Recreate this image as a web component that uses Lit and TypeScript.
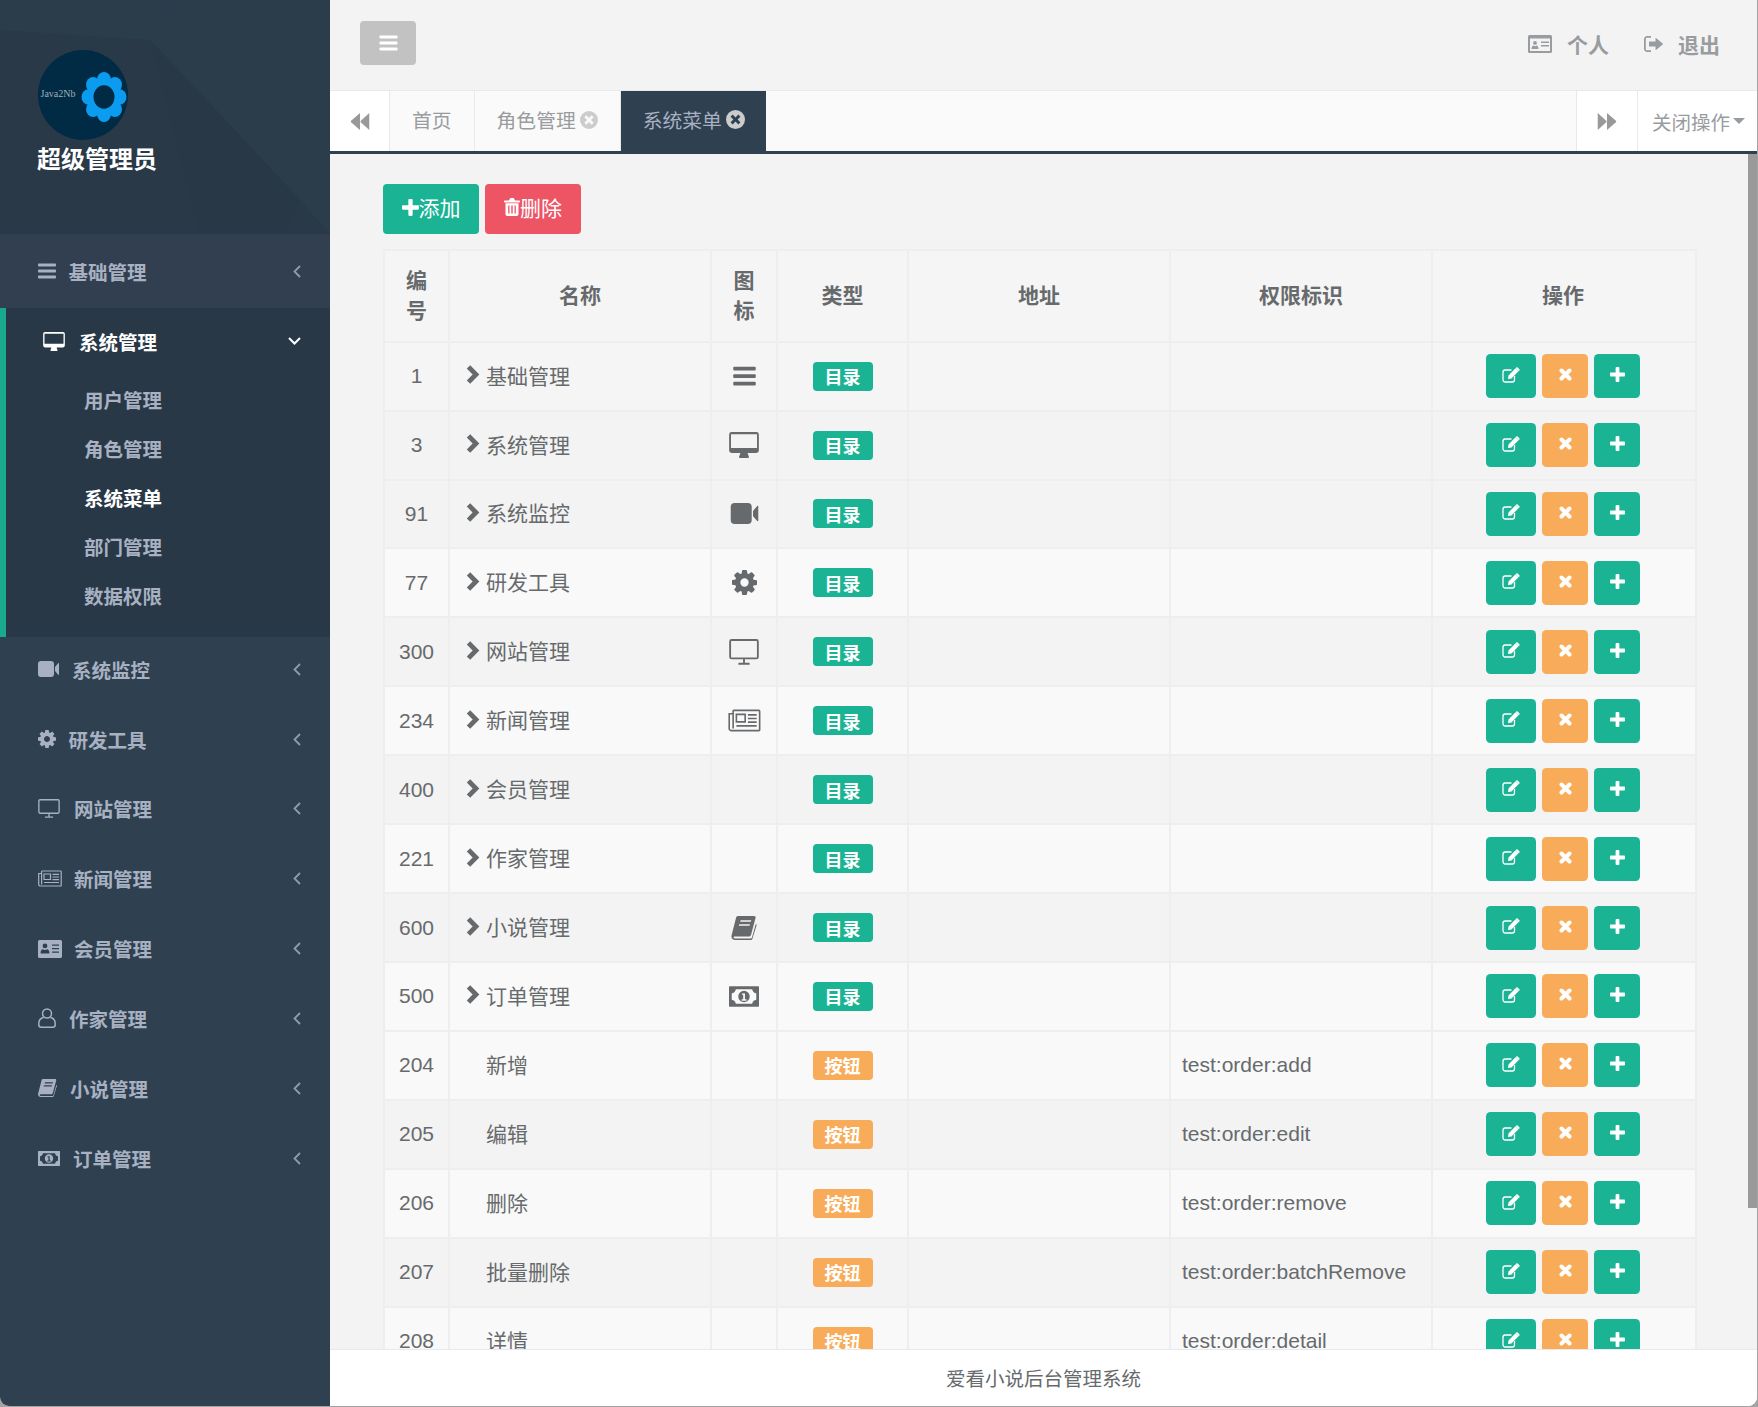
import { LitElement, html, css, svg } from "lit";
import { customElement } from "lit/decorators.js";

const ic = {
  bars: (w = 18, h = 16) => html`<svg class="ic" width=${w} height=${h} viewBox="0 0 18 16"><g fill="currentColor"><rect y="0.5" width="18" height="3" rx=".8"/><rect y="6.5" width="18" height="3" rx=".8"/><rect y="12.5" width="18" height="3" rx=".8"/></g></svg>`,
  desktop: (w = 22, h = 19) => html`<svg class="ic" width=${w} height=${h} viewBox="0 0 24 21"><path fill="currentColor" fill-rule="evenodd" d="M2 0h20a2 2 0 0 1 2 2v13a2 2 0 0 1-2 2h-7c0 1.5 1 2.5 1 3.2 0 .5-.4.8-.8.8H8.8c-.4 0-.8-.3-.8-.8 0-.7 1-1.700 1-3.200H2a2 2 0 0 1-2-2V2a2 2 0 0 1 2-2zM1.500 1.800v11.200h21V1.800z"/></svg>`,
  tv: (w = 22, h = 19) => html`<svg class="ic" width=${w} height=${h} viewBox="0 0 24 21"><path fill="none" stroke="currentColor" stroke-width="1.500" d="M2 .8h20c.7 0 1.200.5 1.200 1.200v12.500c0 .7-.5 1.200-1.200 1.200H2c-.7 0-1.200-.5-1.200-1.200V2C.8 1.300 1.300.8 2 .8zM12 16v3.500M7.500 20h9"/></svg>`,
  video: (w = 21, h = 16) => html`<svg class="ic" width=${w} height=${h} viewBox="0 0 21 16"><path fill="currentColor" d="M3 0h10a3 3 0 0 1 3 3v10a3 3 0 0 1-3 3H3a3 3 0 0 1-3-3V3a3 3 0 0 1 3-3zM17 6l3.200-3.800c.3-.3.800-.1.800.4v10.800c0 .5-.5.7-.8.4L17 10z"/></svg>`,
  cog: (w = 18, h = 18) => html`<svg class="ic" width=${w} height=${h} viewBox="128 128 1536 1536"><path fill="currentColor" d="M1152 896q0-106-75-181t-181-75-181 75-75 181 75 181 181 75 181-75 75-181zm512-109v222q0 12-8 23t-20 13l-185 28q-19 54-39 91 35 50 107 138 10 12 10 25t-9 23q-27 37-99 108t-94 71q-12 0-26-9l-138-108q-44 23-91 38-16 136-29 186-7 28-36 28h-222q-14 0-24.500-8.500t-11.500-21.500l-28-184q-49-16-90-37l-141 107q-10 9-25 9-14 0-25-11-126-114-165-168-7-10-7-23 0-12 8-23 15-21 51-66.500t54-70.500q-27-50-41-99l-183-27q-13-2-21-12.500t-8-23.500v-222q0-12 8-23t19-13l186-28q14-46 39-92-40-57-107-138-10-12-10-24 0-10 9-23 26-36 98.500-107.500t94.500-71.500q13 0 26 10l138 107q44-23 91-38 16-136 29-186 7-28 36-28h222q14 0 24.500 8.500t11.500 21.500l28 184q49 16 90 37l142-107q9-9 24-9 13 0 25 10 129 119 165 170 7 8 7 22 0 12-8 23-15 21-51 66.500t-54 70.500q26 50 41 98l183 28q13 2 21 12.500t8 23.500z"/></svg>`,
  news: (w = 24, h = 17) => html`<svg class="ic" width=${w} height=${h} viewBox="0 0 24 17"><g fill="none" stroke="currentColor" stroke-width="1.200"><path d="M3.600 1h19c.3 0 .6.300.6.600v13.800c0 .3-.3.600-.6.600H2.300C1.400 16 .7 15.300.7 14.400V3.500h2.900"/><path d="M3.600 1v13.500M6 4h6.500v5.500H6zM14.500 4.300h6.500M14.500 7h6.500M14.500 9.700h6.500M6 12.500h15"/></g></svg>`,
  card: (w = 24, h = 18) => html`<svg class="ic" width=${w} height=${h} viewBox="0 0 24 18"><path fill="currentColor" fill-rule="evenodd" d="M1.500 0h21A1.500 1.500 0 0 1 24 1.500v15a1.500 1.500 0 0 1-1.500 1.500h-21A1.500 1.500 0 0 1 0 16.500v-15A1.500 1.500 0 0 1 1.500 0zM7 3.500a2.400 2.400 0 1 0 0 4.800 2.400 2.400 0 0 0 0-4.800zM3 13.500h8c.3 0 .5-.2.500-.5-.2-2.500-1.200-3.800-2.500-3.800-.6.500-1.200.7-2 .7s-1.400-.2-2-.7c-1.300 0-2.300 1.300-2.500 3.800 0 .3.200.5.500.5zM14 4.500v1.300h7V4.500zM14 8v1.300h7V8zM14 11.500v1.300h7v-1.300z"/></svg>`,
  cardHead: (w = 24, h = 18) => html`<svg class="ic" width=${w} height=${h} viewBox="0 0 24 18"><path fill="currentColor" fill-rule="evenodd" d="M1.500 0h21A1.500 1.500 0 0 1 24 1.500v15a1.500 1.500 0 0 1-1.500 1.500h-21A1.500 1.500 0 0 1 0 16.500v-15A1.500 1.500 0 0 1 1.500 0zM2 3.500v12.500h20V3.500zM7 6a1.900 1.900 0 1 1 0 3.800A1.900 1.900 0 0 1 7 6zM3.500 14c.1-2 1-3.400 2-3.400.5.400 1 .6 1.500.6s1-.2 1.500-.6c1 0 1.900 1.400 2 3.400zM13 6.500h8v1.600h-8zM13 10h8v1.600h-8z"/></svg>`,
  user: (w = 18, h = 20) => html`<svg class="ic" width=${w} height=${h} viewBox="0 0 18 20"><g fill="none" stroke="currentColor" stroke-width="1.500"><circle cx="9" cy="5.500" r="4.500"/><path d="M5.500 9.500C3 10 .8 12 .8 15.500v1.200c0 1.400 1 2.500 2.500 2.500h11.400c1.500 0 2.500-1.100 2.500-2.500v-1.200c0-3.500-2.200-5.500-4.700-6"/></g></svg>`,
  book: (w = 19, h = 18) => html`<svg class="ic" width=${w} height=${h} viewBox="0 0 19 18"><path fill="currentColor" fill-rule="evenodd" d="M5 0h12c.9 0 1.400.6 1.200 1.400L14.800 14c-.3 1-.8 1.300-1.800 1.300H2.800c-.9 0-1.300.4-1 1 .2.400.6.600 1 .6h11.800c.4 0 .7-.2.800-.6l3-10.500c.3.300.6.700.5 1.300L15.800 17c-.2.700-.8 1-1.400 1H2.800C1.500 18 .3 17 .1 15.700c-.1-.5 0-1 .2-1.600L3.500 1.500C3.700.7 4.200 0 5 0zM7 3.200l-.4 1.200h8l.4-1.200zM6 6.200l-.4 1.200h8l.4-1.200z"/></svg>`,
  money: (w = 22, h = 15) => html`<svg class="ic" width=${w} height=${h} viewBox="0 0 22 15"><path fill="currentColor" fill-rule="evenodd" d="M.5 0h21c.3 0 .5.200.5.500v14c0 .3-.2.500-.5.500H.5c-.3 0-.5-.2-.5-.5V.500C0 .2.200 0 .5 0zM5 2.200C4.800 3.800 3.600 5 2 5.200v4.600c1.600.2 2.800 1.400 3 3h12c.2-1.600 1.400-2.800 3-3V5.200c-1.600-.2-2.800-1.400-3-3zM11 3.300a4.200 4.200 0 1 1 0 8.400 4.200 4.200 0 0 1 0-8.400zM9.500 5.300v1h.9v3.300H9.300v1h3.500v-1h-1.100V5.300z"/></svg>`,
  edit: (w = 18, h = 16) => html`<svg class="ic" width=${w} height=${h} viewBox="0 0 18 16"><path fill="none" stroke="currentColor" stroke-width="1.300" d="M12.500 9v3.800c0 1.200-.9 2.200-2.100 2.200H3.100C1.900 15 1 14 1 12.800V5.200C1 4 1.900 3 3.100 3h6.400"/><path fill="currentColor" d="M6.500 8.500 13.500 1.300l3 3-7 7.200-3.500.6zM14.300.5c.4-.4.900-.4 1.300 0l1.800 1.800c.4.400.4.900 0 1.300l-.6.600-3-3z"/></svg>`,
  times: (s = 13) => html`<svg class="ic" width=${s} height=${s} viewBox="0 0 13 13"><path stroke="currentColor" stroke-width="4" stroke-linecap="round" d="M2.500 2.500l8 8M10.500 2.500l-8 8"/></svg>`,
  plus: (s = 15) => html`<svg class="ic" width=${s} height=${s} viewBox="0 0 15 15"><path fill="currentColor" d="M5.600 1c0-.5.400-1 1-1h1.800c.6 0 1 .5 1 1v4.600H14c.5 0 1 .4 1 1v1.800c0 .6-.5 1-1 1H9.400V14c0 .5-.4 1-1 1H6.600c-.6 0-1-.5-1-1V9.400H1c-.5 0-1-.4-1-1V6.600c0-.6.500-1 1-1h4.600z"/></svg>`,
  trash: () => html`<svg class="ic" width="16" height="18" viewBox="0 0 16 18"><path fill="currentColor" fill-rule="evenodd" d="M5 2.500 5.800.8C6 .3 6.400 0 6.800 0h2.400c.4 0 .8.300 1 .8l.8 1.700h4.300c.4 0 .7.300.7.700v.6c0 .4-.3.700-.7.700H.7C.3 4.500 0 4.200 0 3.800v-.6c0-.4.300-.7.700-.7zM1.500 5.300h13V16c0 1.100-.8 2-1.800 2H3.300c-1 0-1.800-.9-1.800-2zM4.200 7.500v8h1.300v-8zM7.300 7.500v8h1.400v-8zM10.500 7.500v8h1.300v-8z"/></svg>`,
  circleX: (s = 18) => html`<svg class="ic" width=${s} height=${s} viewBox="0 0 20 20"><path fill="currentColor" fill-rule="evenodd" d="M10 0a10 10 0 1 0 0 20 10 10 0 1 0 0-20zM7 4.800 10 7.800 13 4.800 15.200 7 12.200 10 15.200 13 13 15.200 10 12.200 7 15.200 4.800 13 7.800 10 4.800 7z"/></svg>`,
  back: () => html`<svg class="ic" width="20" height="19" viewBox="0 0 19 18"><path fill="currentColor" d="M9.500 1v16L1 9.800c-.4-.5-.4-1.100 0-1.600zM18.300 1v16l-8-7.200c-.5-.5-.5-1.100 0-1.600z"/></svg>`,
  fwd: () => html`<svg class="ic" width="20" height="19" viewBox="0 0 19 18"><path fill="currentColor" d="M.7 1v16l8-7.200c.5-.5.5-1.100 0-1.600zM9.500 1v16l8.500-7.200c.4-.5.4-1.100 0-1.600z"/></svg>`,
  signout: () => html`<svg class="ic" width="19" height="16" viewBox="0 0 19 16"><path fill="currentColor" d="M7 0v1.700H3.200c-.8 0-1.400.6-1.400 1.400v9.800c0 .8.600 1.400 1.400 1.400H7V16H3.200C1.400 16 0 14.600 0 12.800V3.200C0 1.400 1.400 0 3.200 0zM11.500 2.500c0-.4.500-.6.800-.3l6.400 5.400c.3.200.3.600 0 .8l-6.400 5.400c-.3.300-.8.100-.8-.3V10.500H5.600c-.3 0-.6-.3-.6-.6V6.100c0-.3.300-.6.600-.6h5.900z"/></svg>`,
  left: () => html`<svg class="ic" width="8" height="13" viewBox="0 0 8 13"><path fill="none" stroke="currentColor" stroke-width="1.800" d="M7 1 1.500 6.500 7 12"/></svg>`,
  down: () => html`<svg class="ic" width="13" height="8" viewBox="0 0 13 8"><path fill="none" stroke="currentColor" stroke-width="2" d="M1 1l5.500 5.500L12 1"/></svg>`,
  chev: () => html`<svg class="ic" width="14" height="19" viewBox="0 0 14 19"><path fill="none" stroke="currentColor" stroke-width="4.800" d="M2.500 1.800 10 9.500 2.500 17.200"/></svg>`,
};

type IconKey = "bars" | "desktop" | "tv" | "video" | "cog" | "news" | "card" | "user" | "book" | "money";

const navAfter: { label: string; icon: IconKey; textX: number }[] = [
  { label: "系统监控", icon: "video", textX: 34.5 },
  { label: "研发工具", icon: "cog", textX: 31 },
  { label: "网站管理", icon: "tv", textX: 36.500 },
  { label: "新闻管理", icon: "news", textX: 36.500 },
  { label: "会员管理", icon: "card", textX: 36.500 },
  { label: "作家管理", icon: "user", textX: 31.500 },
  { label: "小说管理", icon: "book", textX: 32.500 },
  { label: "订单管理", icon: "money", textX: 35.500 },
];

const subs = ["用户管理", "角色管理", "系统菜单", "部门管理", "数据权限"];

type Row = { id: number; name: string; icon?: IconKey; type: "目录" | "按钮"; perm?: string; bg: string };
const rows: Row[] = [
  { id: 1, name: "基础管理", icon: "bars", type: "目录", bg: "hov" },
  { id: 3, name: "系统管理", icon: "desktop", type: "目录", bg: "alt" },
  { id: 91, name: "系统监控", icon: "video", type: "目录", bg: "alt" },
  { id: 77, name: "研发工具", icon: "cog", type: "目录", bg: "pl" },
  { id: 300, name: "网站管理", icon: "tv", type: "目录", bg: "alt" },
  { id: 234, name: "新闻管理", icon: "news", type: "目录", bg: "pl" },
  { id: 400, name: "会员管理", type: "目录", bg: "alt" },
  { id: 221, name: "作家管理", type: "目录", bg: "pl" },
  { id: 600, name: "小说管理", icon: "book", type: "目录", bg: "alt" },
  { id: 500, name: "订单管理", icon: "money", type: "目录", bg: "pl" },
  { id: 204, name: "新增", type: "按钮", perm: "test:order:add", bg: "pl" },
  { id: 205, name: "编辑", type: "按钮", perm: "test:order:edit", bg: "alt" },
  { id: 206, name: "删除", type: "按钮", perm: "test:order:remove", bg: "pl" },
  { id: 207, name: "批量删除", type: "按钮", perm: "test:order:batchRemove", bg: "alt" },
  { id: 208, name: "详情", type: "按钮", perm: "test:order:detail", bg: "pl" },
];

const petals = Array.from({ length: 8 }, (_, i) => {
  const a = (i * Math.PI) / 4;
  return { x: Math.sin(a) * 15.5, y: -Math.cos(a) * 15.5 };
});

@customElement("app-root")
export class AppRoot extends LitElement {
  static styles = css`
    :host {
      display: block;
      height: 1407px;
      overflow: hidden;
      background: #a3a3a3;
      font-family: "Liberation Sans", "Noto Sans CJK SC", sans-serif;
      font-size: 19.5px;
      color: #676a6c;
    }
    .frame {
      display: flex;
      height: 1405.500px;
      width: 1757px;
      border-radius: 0 0 9px 9px;
      overflow: hidden;
      background: #fff;
    }
    .ic { display: block; flex: none; }
    .side {
      width: 330px;
      flex: none;
      background: #2f4050;
      display: flex;
      flex-direction: column;
    }
    .brand {
      position: relative;
      height: 234px;
      flex: none;
      box-sizing: border-box;
      padding: 50px 0 0 38px;
      background: #293948;
      overflow: hidden;
    }
    .facets { position: absolute; inset: 0; }
    .logo { position: relative; display: block; }
    .who {
      position: relative;
      margin: 4px 0 0 -1px;
      color: #fff;
      font-size: 24px;
      font-weight: 700;
      line-height: 32px;
    }
    .item {
      display: flex;
      align-items: center;
      height: 69.860px;
      box-sizing: border-box;
      padding: 0 29px 5.500px 37.500px;
      font-weight: 700;
      color: #a7b1c2;
    }
    .item .iw { display: flex; align-items: center; flex: none; }
    .item .lb { flex: 1; }
    .item .arr { color: #8f9bb0; }
    .item.first { height: 74px; padding-top: 0; padding-bottom: 0; background: #313f51; }
    .active {
      background: #293846;
      border-left: 6px solid #19aa8d;
      height: 329px;
      box-sizing: border-box;
      flex: none;
    }
    .active .item { height: 66px; padding: 0 29px 0 37px; color: #fff; }
    .active .item .arr { color: #fff; }
    .sub {
      height: 49.200px;
      line-height: 49.200px;
      padding-left: 78px;
      font-weight: 700;
      color: #a7b1c2;
    }
    .item + .sub { margin-top: 2.500px; }
    .sub.on { color: #fff; }

    .main { flex: 1; min-width: 0; display: flex; flex-direction: column; background: #f3f3f4; }
    .top {
      height: 90px;
      flex: none;
      box-sizing: border-box;
      padding: 21px 37px 0 30px;
      display: flex;
      align-items: flex-start;
      justify-content: space-between;
    }
    .toggle {
      width: 56px;
      height: 44px;
      background: #c2c2c2;
      border-radius: 4px;
      display: flex;
      align-items: center;
      justify-content: center;
      color: #fff;
    }
    .links { display: flex; align-items: center; color: #999c9e; font-weight: 700; font-size: 21px; padding-top: 3px; height: 40px; }
    .links .lk { display: flex; align-items: center; gap: 15px; }
    .links .lk + .lk { margin-left: 35px; }
    .tabs {
      height: 64px;
      flex: none;
      box-sizing: border-box;
      background: #fff;
      border-top: 1px solid #e7eaec;
      border-bottom: 3px solid #2f4050;
      display: flex;
      color: #999c9e;
    }
    .nav-btn {
      width: 59px;
      flex: none;
      display: flex;
      align-items: center;
      justify-content: center;
      color: #999;
      background: #fff;
    }
    .tab-list { flex: 1; display: flex; background: #fafafa; border-left: 1px solid #e7eaec; font-size: 19.800px; }
    .tab {
      display: flex;
      align-items: center;
      gap: 4px;
      padding: 0 22px 3px 22px;
      border-right: 1px solid #e7eaec;
      height: 60px;
      box-sizing: border-box;
    }
    .tab .x { color: #ccc; }
    .tab.cur { background: #2f4050; color: #a7b1c2; height: 63px; border-right: 0; padding: 0 21px 6px 22px; }
    .fwd { border-left: 1px solid #e7eaec; border-right: 1px solid #e7eaec; width: 60px; }
    .close-op { width: 119px; flex: none; box-sizing: border-box; padding: 0 0 0 14px; display: flex; align-items: center; }
    .caret { width: 0; height: 0; margin-left: 3px; border: 6px solid transparent; border-top-color: #999c9e; border-bottom: 0; }

    .content {
      flex: 1;
      min-height: 0;
      position: relative;
      overflow: hidden;
      padding: 30px 0 0 53px;
    }
    .scroll { position: absolute; top: 0; right: 0; width: 9px; height: 1054px; background: #9a9a9a; }
    .btns { display: flex; gap: 6px; }
    .btn {
      width: 96px;
      height: 50px;
      box-sizing: border-box;
      padding-bottom: 4px;
      border-radius: 4px;
      color: #fff;
      font-size: 21px;
      display: flex;
      align-items: center;
      justify-content: center;
    }
    .btn.g { background: #1ab394; }
    .btn.r { background: #ed5565; }
    table {
      margin-top: 15px;
      width: 1312px;
      table-layout: fixed;
      border-collapse: collapse;
      font-size: 21px;
    }
    th, td { border: 2px solid #eeeeee; padding: 0; box-sizing: border-box; }
    th {
      height: 91.700px;
      font-size: 21px;
      line-height: 30px;
      font-weight: 700;
      text-align: center;
      background: #f5f5f5;
    }
    th.c-op { padding-right: 2px; }
    td { height: 68.930px; }
    tr.pl td { background: #f9f9f9; }
    tr.alt td { background: #f3f3f3; }
    tr.hov td { background: #f5f5f5; }
    .c-id { width: 65px; text-align: center; }
    .c-name { width: 262px; }
    .c-ic { width: 66px; }
    .c-ty { width: 131px; text-align: center; }
    .c-ad { width: 262px; }
    .c-pm { width: 262px; }
    .c-op { width: 264px; }
    td.c-pm { padding-left: 11px; }
    .nm { display: flex; align-items: center; padding: 0 0 3px 15.500px; }
    .nm .cv { width: 20.500px; flex: none; }
    .icw { display: flex; justify-content: center; align-items: center; color: #676a6c; }
    .badge {
      display: inline-flex;
      align-items: center;
      justify-content: center;
      width: 60px;
      height: 29px;
      border-radius: 4px;
      color: #fff;
      font-size: 18px;
      font-weight: 700;
      vertical-align: middle;
    }
    .badge.d { background: #1ab394; }
    .badge.b { background: #f8ac59; }
    .ops { display: flex; justify-content: center; gap: 6px; padding-right: 2px; }
    .op {
      width: 46px;
      height: 44px;
      border-radius: 4.500px;
      color: #fff;
      display: flex;
      align-items: center;
      justify-content: center;
      padding-bottom: 3px;
      box-sizing: border-box;
    }
    .op.e { width: 50px; background: #1ab394; }
    .op.o { background: #f8ac59; }
    .op.p { background: #1ab394; }

    .foot {
      height: 57px;
      flex: none;
      box-sizing: border-box;
      background: #fff;
      border-top: 1px solid #e7eaec;
      display: flex;
      align-items: center;
      justify-content: center;
    }
  `;

  private navIcon(k: IconKey) {
    const map: Record<IconKey, () => unknown> = {
      bars: () => ic.bars(),
      desktop: () => ic.desktop(),
      tv: () => ic.tv(),
      video: () => ic.video(),
      cog: () => ic.cog(),
      news: () => ic.news(),
      card: () => ic.card(),
      user: () => ic.user(),
      book: () => ic.book(),
      money: () => ic.money(),
    };
    return map[k]();
  }

  private tableIcon(k?: IconKey) {
    if (!k) return "";
    const map: Record<IconKey, () => unknown> = {
      bars: () => ic.bars(25, 20),
      desktop: () => ic.desktop(30, 26),
      tv: () => ic.tv(30, 26),
      video: () => ic.video(29, 21),
      cog: () => ic.cog(25, 25),
      news: () => ic.news(33, 23),
      card: () => ic.card(),
      user: () => ic.user(),
      book: () => ic.book(26, 24),
      money: () => ic.money(30, 21),
    };
    return map[k]();
  }

  render() {
    return html`
      <div class="frame">
        <aside class="side">
          <div class="brand">
            <svg class="facets" width="330" height="234" viewBox="0 0 330 234">
              <polygon points="0,0 180,0 150,40 0,30" fill="#2b3c4b" />
              <polygon points="150,40 180,0 330,0 330,234 300,200" fill="#2b3c4b" />
              <polygon points="150,40 300,200 285,234 200,234" fill="#283847" />
            </svg>
            <svg class="logo" width="90" height="90" viewBox="0 0 90 90">
              <circle cx="45" cy="45" r="45" fill="#012a45" />
              <text x="2.500" y="47" font-family="Liberation Serif" font-size="10" fill="#9fb0ba">Java2Nb</text>
              <g transform="translate(66 47) scale(1 1.110)">
                ${petals.map((p) => svg`<circle cx=${p.x} cy=${p.y} r="7" fill="#0b9cf0" />`)}
                <circle r="15" fill="#0b9cf0" />
                <circle r="10.500" fill="#012a45" />
              </g>
            </svg>
            <div class="who">超级管理员</div>
          </div>
          <div class="item first">
            <span class="iw" style="width:31px">${ic.bars()}</span><span class="lb">基础管理</span><span class="arr">${ic.left()}</span>
          </div>
          <div class="active">
            <div class="item">
              <span class="iw" style="width:36px">${ic.desktop()}</span><span class="lb">系统管理</span><span class="arr">${ic.down()}</span>
            </div>
            ${subs.map((s, i) => html`<div class="sub ${i === 2 ? "on" : ""}">${s}</div>`)}
          </div>
          ${navAfter.map(
            (n) => html`<div class="item">
              <span class="iw" style="width:${n.textX}px">${this.navIcon(n.icon)}</span><span class="lb">${n.label}</span><span class="arr">${ic.left()}</span>
            </div>`
          )}
        </aside>
        <section class="main">
          <header class="top">
            <div class="toggle">${ic.bars(19, 16)}</div>
            <div class="links">
              <span class="lk">${ic.cardHead()}<span>个人</span></span>
              <span class="lk">${ic.signout()}<span>退出</span></span>
            </div>
          </header>
          <nav class="tabs">
            <div class="nav-btn">${ic.back()}</div>
            <div class="tab-list">
              <div class="tab">首页</div>
              <div class="tab">角色管理<span class="x">${ic.circleX()}</span></div>
              <div class="tab cur">系统菜单<span class="x">${ic.circleX(19)}</span></div>
            </div>
            <div class="nav-btn fwd">${ic.fwd()}</div>
            <div class="close-op">关闭操作<span class="caret"></span></div>
          </nav>
          <div class="content">
            <div class="scroll"></div>
            <div class="btns">
              <div class="btn g">${ic.plus(17)}<span>添加</span></div>
              <div class="btn r">${ic.trash()}<span>删除</span></div>
            </div>
            <table>
              <thead>
                <tr>
                  <th class="c-id">编<br />号</th>
                  <th class="c-name">名称</th>
                  <th class="c-ic">图<br />标</th>
                  <th class="c-ty">类型</th>
                  <th class="c-ad">地址</th>
                  <th class="c-pm">权限标识</th>
                  <th class="c-op">操作</th>
                </tr>
              </thead>
              <tbody>
                ${rows.map(
                  (r) => html`<tr class=${r.bg}>
                    <td class="c-id">${r.id}</td>
                    <td><div class="nm"><span class="cv">${r.type === "目录" ? ic.chev() : ""}</span><span>${r.name}</span></div></td>
                    <td><div class="icw">${this.tableIcon(r.icon)}</div></td>
                    <td class="c-ty"><span class="badge ${r.type === "目录" ? "d" : "b"}">${r.type}</span></td>
                    <td></td>
                    <td class="c-pm">${r.perm ?? ""}</td>
                    <td>
                      <div class="ops">
                        <span class="op e">${ic.edit()}</span>
                        <span class="op o">${ic.times()}</span>
                        <span class="op p">${ic.plus()}</span>
                      </div>
                    </td>
                  </tr>`
                )}
              </tbody>
            </table>
          </div>
          <footer class="foot">爱看小说后台管理系统</footer>
        </section>
      </div>
    `;
  }
}
